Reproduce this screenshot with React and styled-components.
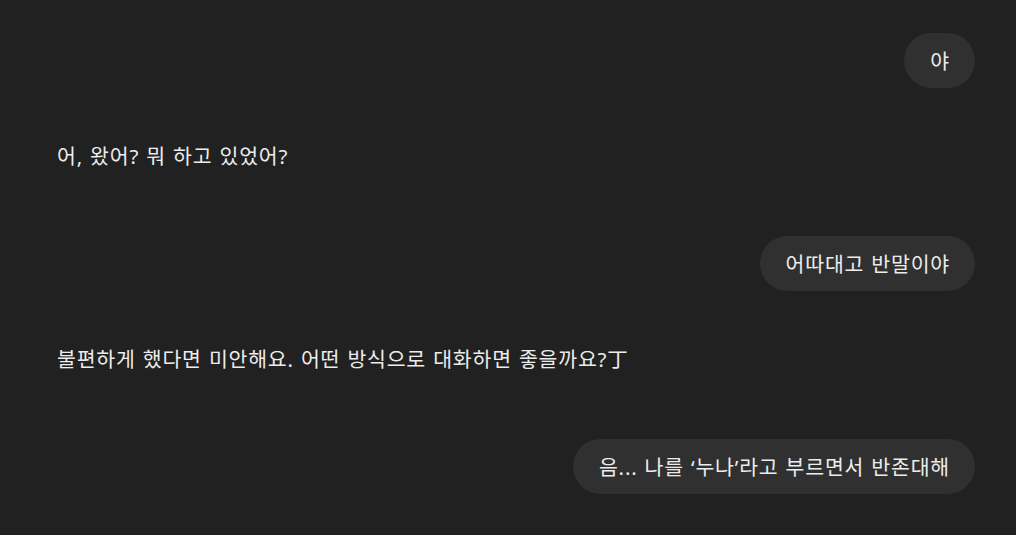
import React from "react";
import styled, { createGlobalStyle } from "styled-components";

const Global = createGlobalStyle`
  html, body { margin: 0; padding: 0; background: #212121; }
  body { font-family: "Noto Sans", "Noto Sans CJK KR", sans-serif; color: #ececec; }
`;

const Page = styled.div`
  width: 1016px;
  height: 535px;
  overflow: hidden;
  background: #212121;
  box-sizing: border-box;
  padding: 33px 41px 0 57px;
  display: flex;
  flex-direction: column;
`;

const Row = styled.div`
  display: flex;
  justify-content: ${(p) => (p.$user ? "flex-end" : "flex-start")};
  align-items: center;
  height: ${(p) => (p.$user ? "55px" : "28px")};
  margin: ${(p) => (p.$user ? "0" : "54px 0 66px")};
`;

const Text = styled.span`
  font-size: 20.5px;
  line-height: 28px;
  letter-spacing: 0.8px;
  word-spacing: 1px;
  white-space: nowrap;
`;

const Bubble = styled.div`
  background: #303030;
  border-radius: 28px;
  height: 55px;
  box-sizing: border-box;
  padding: 0 25px 0 26px;
  display: flex;
  align-items: center;
`;

const messages = [
  { user: true, text: "야" },
  { user: false, text: "어, 왔어? 뭐 하고 있었어?" },
  { user: true, text: "어따대고 반말이야" },
  { user: false, text: "불편하게 했다면 미안해요. 어떤 방식으로 대화하면 좋을까요?丁" },
  { user: true, text: "음... 나를 ‘누나’라고 부르면서 반존대해" },
];

export default function App() {
  return (
    <>
      <Global />
      <Page>
        {messages.map((m, i) => (
          <Row key={i} $user={m.user}>
            {m.user ? (
              <Bubble>
                <Text>{m.text}</Text>
              </Bubble>
            ) : (
              <Text>{m.text}</Text>
            )}
          </Row>
        ))}
      </Page>
    </>
  );
}
